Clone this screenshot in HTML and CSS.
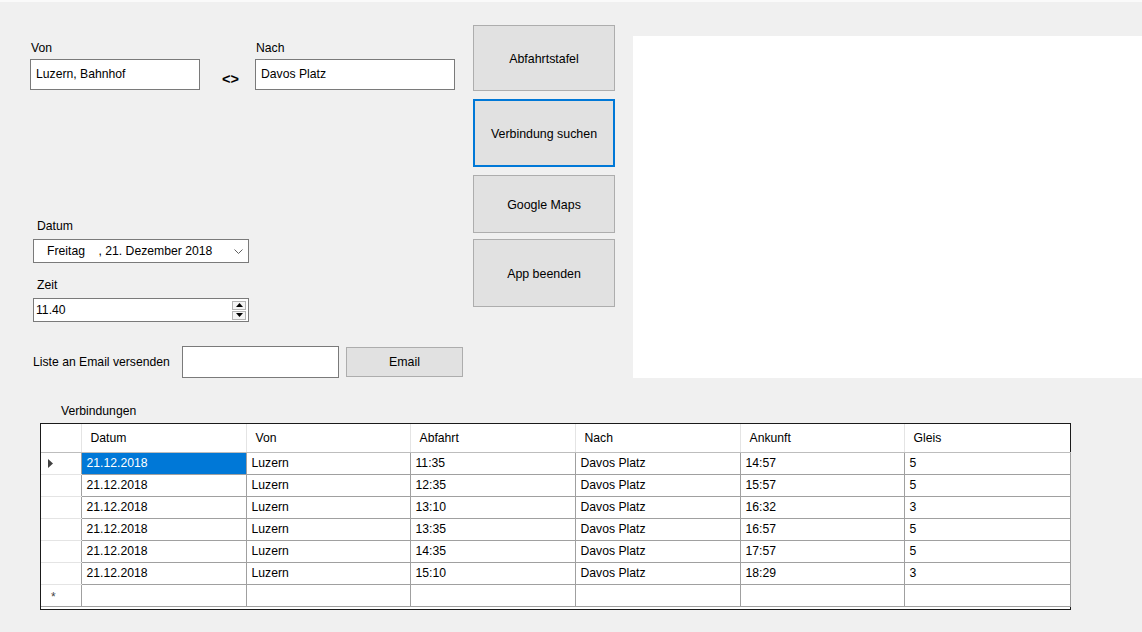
FILE: index.html
```html
<!DOCTYPE html>
<html lang="de">
<head>
<meta charset="utf-8">
<title>Fahrplan</title>
<link rel="stylesheet" href="styles.css">
</head>
<body>
<div class="app">
  <div class="top">
    <div class="form">
      <div class="route">
        <div class="field field-von">
          <div class="label">Von</div>
          <div class="textbox">Luzern, Bahnhof</div>
        </div>
        <div class="swap">&lt;&gt;</div>
        <div class="field field-nach">
          <div class="label">Nach</div>
          <div class="textbox textbox-nach">Davos Platz</div>
        </div>
      </div>

      <div class="datetime">
        <div class="label label-indent">Datum</div>
        <div class="picker">
          <span class="picker-text">Freitag&nbsp;&nbsp;&nbsp;&nbsp;, 21. Dezember 2018</span>
          <svg class="chevron" width="9" height="5" viewBox="0 0 9 5"><polyline points="0.5,0.5 4.5,4.5 8.5,0.5" fill="none" stroke="#606060" stroke-width="1"/></svg>
        </div>
        <div class="label label-indent label-zeit">Zeit</div>
        <div class="numeric">
          <span class="numeric-text">11.40</span>
          <div class="spin">
            <div class="spin-btn"><svg width="7" height="4" viewBox="0 0 7 4"><polygon points="0,4 3.5,0 7,4" fill="#000"/></svg></div>
            <div class="spin-btn"><svg width="7" height="4" viewBox="0 0 7 4"><polygon points="0,0 7,0 3.5,4" fill="#000"/></svg></div>
          </div>
        </div>
      </div>

      <div class="email-row">
        <div class="email-label">Liste an Email versenden</div>
        <div class="textbox email-box"></div>
        <div class="btn email-btn">Email</div>
      </div>
    </div>

    <div class="buttons">
      <div class="btn btn-big btn-1">Abfahrtstafel</div>
      <div class="btn btn-big btn-2 focused">Verbindung suchen</div>
      <div class="btn btn-big btn-3">Google Maps</div>
      <div class="btn btn-big btn-4">App beenden</div>
    </div>

    <div class="panel"></div>
  </div>

  <div class="grid-label">Verbindungen</div>
  <div class="grid">
    <table>
      <colgroup>
        <col class="c-rh"><col class="c1"><col class="c2"><col class="c3"><col class="c4"><col class="c5"><col class="c6">
      </colgroup>
      <thead>
        <tr><th class="rh"></th><th>Datum</th><th>Von</th><th>Abfahrt</th><th>Nach</th><th>Ankunft</th><th>Gleis</th></tr>
      </thead>
      <tbody>
        <tr><td class="rh"><svg width="5" height="9" viewBox="0 0 5 9"><polygon points="0,0 5,4.5 0,9" fill="#404040"/></svg></td><td class="sel">21.12.2018</td><td>Luzern</td><td>11:35</td><td>Davos Platz</td><td>14:57</td><td>5</td></tr>
        <tr><td class="rh"></td><td>21.12.2018</td><td>Luzern</td><td>12:35</td><td>Davos Platz</td><td>15:57</td><td>5</td></tr>
        <tr><td class="rh"></td><td>21.12.2018</td><td>Luzern</td><td>13:10</td><td>Davos Platz</td><td>16:32</td><td>3</td></tr>
        <tr><td class="rh"></td><td>21.12.2018</td><td>Luzern</td><td>13:35</td><td>Davos Platz</td><td>16:57</td><td>5</td></tr>
        <tr><td class="rh"></td><td>21.12.2018</td><td>Luzern</td><td>14:35</td><td>Davos Platz</td><td>17:57</td><td>5</td></tr>
        <tr><td class="rh"></td><td>21.12.2018</td><td>Luzern</td><td>15:10</td><td>Davos Platz</td><td>18:29</td><td>3</td></tr>
        <tr class="newrow"><td class="rh"><span class="star">*</span></td><td></td><td></td><td></td><td></td><td></td><td></td></tr>
      </tbody>
    </table>
  </div>
</div>
</body>
</html>
```

FILE: styles.css
```css
* { box-sizing: border-box; }
html, body { margin: 0; padding: 0; }
body {
  font-family: "Liberation Sans", Arial, sans-serif;
  font-size: 12.2px;
  color: #000;
  background: #f0f0f0;
}
.app {
  width: 1142px;
  height: 632px;
  background: #f0f0f0;
  border-top: 2px solid #fafafa;
  overflow: hidden;
}
.top {
  display: flex;
  align-items: flex-start;
  height: 376px;
}
.form {
  width: 473px;
  flex: none;
}
.label {
  height: 14px;
  line-height: 14px;
  white-space: nowrap;
}
.textbox {
  background: #fff;
  border: 1px solid #7a7a7a;
  height: 31px;
  line-height: 28px;
  padding-left: 5px;
  white-space: nowrap;
}
/* route */
.route {
  display: flex;
  align-items: flex-start;
  margin-top: 39px;
  padding-left: 30px;
}
.field-von { width: 170px; }
.field-nach { width: 200px; }
.field .label { margin: 0 0 4px 1px; }
.field .textbox-nach { margin-top: 2px; height: 31px; line-height: 28px; }
.swap {
  width: 22px;
  margin: 30px 11px 0 22px;
  font-weight: bold;
  font-size: 14.5px;
  line-height: 16px;
  text-align: left;
}
/* date/time */
.datetime {
  margin-top: 129px;
  padding-left: 33px;
}
.label-indent { padding-left: 4px; margin-bottom: 6px; }
.label-zeit { margin-top: 15px; }
.picker, .numeric {
  width: 216px;
  height: 24px;
  background: #fff;
  border: 1px solid #7a7a7a;
  display: flex;
  align-items: center;
}
.picker-text { padding-left: 13px; flex: 1; white-space: pre; }
.chevron { margin-right: 5px; margin-top: 1px; }
.numeric-text { padding-left: 2px; flex: 1; }
.spin {
  display: flex;
  flex-direction: column;
  gap: 1px;
  margin-right: 2px;
}
.spin-btn {
  width: 14px;
  height: 9px;
  border: 1px solid #b4b4b4;
  background: #f4f4f4;
  display: flex;
  align-items: center;
  justify-content: center;
}
/* email */
.email-row {
  display: flex;
  align-items: flex-start;
  margin-top: 24px;
  padding-left: 33px;
}
.email-label {
  width: 149px;
  line-height: 32px;
  white-space: nowrap;
}
.email-box { width: 157px; height: 32px; margin-right: 7px; }
.btn {
  background: #e1e1e1;
  border: 1px solid #adadad;
  display: flex;
  align-items: center;
  justify-content: center;
  white-space: nowrap;
}
.email-btn { width: 117px; height: 30px; margin-top: 1px; font-size: 12.4px; }
/* buttons column */
.buttons {
  width: 142px;
  flex: none;
  margin-top: 23px;
  display: flex;
  flex-direction: column;
}
.btn-big { width: 142px; font-size: 12.4px; padding-top: 1px; }
.btn-1 { height: 66px; }
.btn-2 { height: 68px; margin-top: 8px; }
.btn-3 { height: 58px; margin-top: 8px; }
.btn-4 { height: 68px; margin-top: 6px; }
.focused { border: 2px solid #0078d7; }
.panel {
  flex: 1;
  margin-left: 18px;
  margin-top: 34px;
  height: 342px;
  background: #fff;
}
/* grid */
.grid-label {
  margin: 26px 0 0 61px;
  height: 14px;
  line-height: 14px;
}
.grid {
  margin: 5px 0 0 40px;
  width: 1031px;
  height: 187px;
  border: 1px solid #1a1a1a;
  background: #fff;
}
.grid table {
  border-collapse: collapse;
  table-layout: fixed;
  width: 1029px;
}
.c-rh { width: 40px; }
.c1 { width: 165px; }
.c2 { width: 164px; }
.c3 { width: 165px; }
.c4 { width: 165px; }
.c5 { width: 164px; }
.c6 { width: 166px; }
.grid th {
  height: 28px;
  font-weight: normal;
  text-align: left;
  padding: 0 0 0 9px;
  border-right: 1px solid #e4e4e4;
  border-bottom: 1px solid #bdbdbd;
  background: #fff;
}
.grid th:last-child { border-right: none; }
.grid td {
  height: 22px;
  padding: 0 0 0 5px;
  border-right: 1px solid #a0a0a0;
  border-bottom: 1px solid #a0a0a0;
  white-space: nowrap;
  line-height: 20px;
}
.grid td:last-child { border-right: 1px solid #a0a0a0; }
.grid td.rh {
  border-bottom: 1px solid #e4e4e4;
  border-right: 1px solid #a0a0a0;
  padding: 0 0 0 7px;
}
.grid td.rh svg { display: block; }
.grid tr:last-child td.rh { border-bottom: 1px solid #a0a0a0; }
.grid th.rh { border-right: 1px solid #e4e4e4; }
.grid td.sel { background: #0078d7; color: #fff; }
.star {
  display: block;
  font-size: 12px;
  color: #444;
  padding: 4px 0 0 3px;
  line-height: 16px;
}
```
